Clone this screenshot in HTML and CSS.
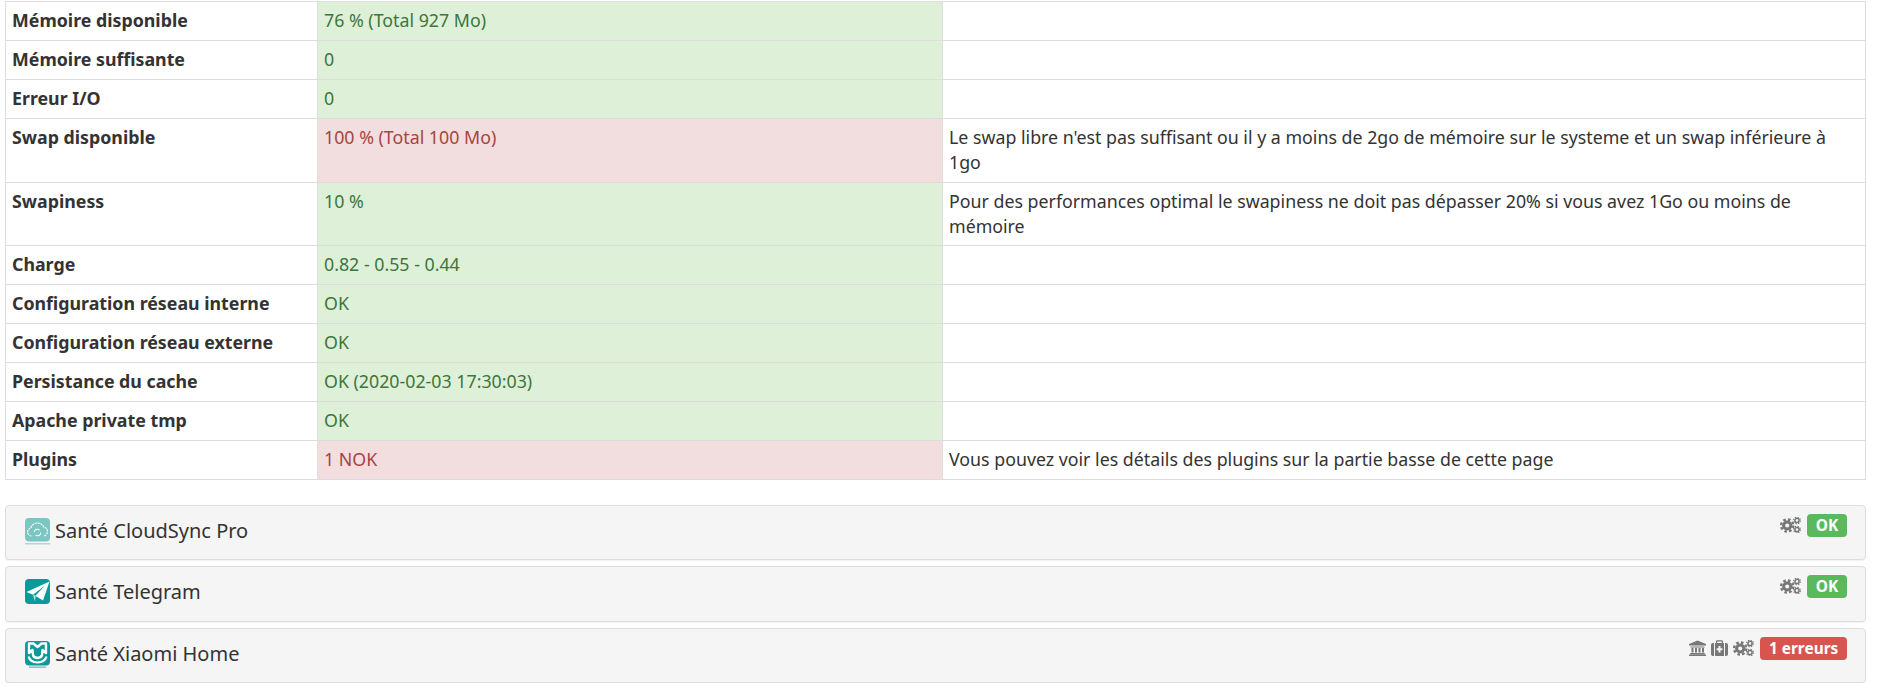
FILE: index.html
```html
<!DOCTYPE html>
<html lang="fr">
<head>
    <meta charset="UTF-8">
    <title>Santé</title>
    <link rel="stylesheet" href="styles.css">
</head>
<body>
    <svg class="defs" width="0" height="0">
        <symbol id="cogs" viewBox="0 0 21 16">
            <circle cx="7.2" cy="8.5" r="3.6" fill="none" stroke="currentColor" stroke-width="3"/>
            <circle cx="7.2" cy="8.5" r="6.1" fill="none" stroke="currentColor" stroke-width="2.400" stroke-dasharray="2.600 2.190"/>
            <circle cx="17" cy="3.4" r="2.100" fill="none" stroke="currentColor" stroke-width="1.500"/>
            <circle cx="17" cy="3.4" r="3.400" fill="none" stroke="currentColor" stroke-width="1.100" stroke-dasharray="1.400 1.270"/>
            <circle cx="17" cy="12.600" r="2.100" fill="none" stroke="currentColor" stroke-width="1.500"/>
            <circle cx="17" cy="12.600" r="3.400" fill="none" stroke="currentColor" stroke-width="1.100" stroke-dasharray="1.400 1.270"/>
        </symbol>
        <symbol id="bank" viewBox="0 0 17 16">
            <path d="M8.5 0.5 17 4v1.5H0V4z" fill="currentColor"/>
            <path d="M1.5 6.5h14v1h-14zM2.5 8h2v4.5h-2zM6 8h2v4.5H6zM9.5 8h2v4.5h-2zM13 8h2v4.500h-2zM1.200 13h14.600v1.200H1.200zM0 14.600h17V16H0z" fill="currentColor"/>
        </symbol>
        <symbol id="medkit" viewBox="0 0 17 16">
            <path fill-rule="evenodd" d="M5 3V1.500Q5 0.300 6.200 0.300h4.600Q12 0.300 12 1.500V3h1v13H4V3zM6.200 3h4.600V1.500H6.200zM7.500 6v2.200H5.600v2.100h1.900v2.200h2v-2.200h1.900V8.200h-1.900V6z" fill="currentColor"/>
            <path d="M0 5Q0 3 2 3h1v13H2Q0 16 0 14zM14 3h1q2 0 2 2v9q0 2-2 2h-1z" fill="currentColor"/>
        </symbol>
    </svg>

    <table class="health-table">
        <tr><th>Mémoire disponible</th><td class="ok">76 % (Total 927 Mo)</td><td></td></tr>
        <tr><th>Mémoire suffisante</th><td class="ok">0</td><td></td></tr>
        <tr><th>Erreur I/O</th><td class="ok">0</td><td></td></tr>
        <tr><th>Swap disponible</th><td class="nok">100 % (Total 100 Mo)</td><td>Le swap libre n'est pas suffisant ou il y a moins de 2go de mémoire sur le systeme et un swap inférieure à 1go</td></tr>
        <tr><th>Swapiness</th><td class="ok">10 %</td><td>Pour des performances optimal le swapiness ne doit pas dépasser 20% si vous avez 1Go ou moins de mémoire</td></tr>
        <tr><th>Charge</th><td class="ok">0.82 - 0.55 - 0.44</td><td></td></tr>
        <tr><th>Configuration réseau interne</th><td class="ok">OK</td><td></td></tr>
        <tr><th>Configuration réseau externe</th><td class="ok">OK</td><td></td></tr>
        <tr><th>Persistance du cache</th><td class="ok">OK (2020-02-03 17:30:03)</td><td></td></tr>
        <tr><th>Apache private tmp</th><td class="ok">OK</td><td></td></tr>
        <tr><th>Plugins</th><td class="nok">1 NOK</td><td>Vous pouvez voir les détails des plugins sur la partie basse de cette page</td></tr>
    </table>

    <div class="panels">
        <div class="panel">
            <h3 class="panel-title">
                <svg class="logo" viewBox="0 0 25 27">
                    <rect width="25" height="23.500" rx="4" fill="#7cc6c2"/>
                    <path d="M6.500 18a4 4 0 0 1-.8-7.900 7 7 0 0 1 13-1.200 4.700 4.700 0 0 1 .3 9.100" fill="none" stroke="#fff" stroke-width="1.100" stroke-dasharray="2.200 .7"/>
                    <circle cx="12.500" cy="14.500" r="3.200" fill="none" stroke="#fff" stroke-width="1.100" stroke-dasharray="7 3"/>
                    <rect x="0" y="25" width="25" height="1.500" fill="#7cc6c2" opacity=".6"/>
                </svg>
                Santé CloudSync Pro
            </h3>
            <div class="panel-status">
                <svg class="fa cogs"><use href="#cogs"/></svg>
                <span class="badge badge-ok">OK</span>
            </div>
        </div>
        <div class="panel">
            <h3 class="panel-title">
                <svg class="logo" viewBox="0 0 25 27">
                    <rect width="25" height="25" rx="4" fill="#0a9a9a"/>
                    <path d="M24.500 2.500 1.500 13l6.500 2.800L20 6.500l-9.500 10.200V17l7.500 4.500z" fill="#fff"/>
                    <path d="M8 15.800 10 22.500l.5-5.800z" fill="#cdeaea"/>
                </svg>
                Santé Telegram
            </h3>
            <div class="panel-status">
                <svg class="fa cogs"><use href="#cogs"/></svg>
                <span class="badge badge-ok">OK</span>
            </div>
        </div>
        <div class="panel">
            <h3 class="panel-title">
                <svg class="logo" viewBox="0 0 25 27">
                    <rect width="25" height="24.500" rx="4" fill="#0a9a9a"/>
                    <path d="M4 2.500h4.500l4 3.500 4-3.500H21v9.500l-3.500-3-.5 5q-.4 2.500-4.500 3-4.100-.5-4.500-3l-.5-5L4 12z" fill="none" stroke="#fff" stroke-width="2.400" stroke-linejoin="round"/>
                    <path d="M3.500 15.500q1.500 5.500 9 6 7.500-.5 9-6" fill="none" stroke="#fff" stroke-width="2.200"/>
                    <rect x="4" y="25.500" width="17" height="1.300" fill="#0a9a9a" opacity=".6"/>
                </svg>
                Santé Xiaomi Home
            </h3>
            <div class="panel-status">
                <svg class="fa bank"><use href="#bank"/></svg>
                <svg class="fa medkit"><use href="#medkit"/></svg>
                <svg class="fa cogs"><use href="#cogs"/></svg>
                <span class="badge badge-error">1 erreurs</span>
            </div>
        </div>
    </div>
</body>
</html>
```

FILE: styles.css
```css
* {
    box-sizing: border-box;
}

body {
    margin: 0;
    padding: 1px 11px 0 5px;
    font-family: 'Noto Sans', sans-serif;
    font-size: 17.8px;
    line-height: 25px;
    color: #333;
    background: #fff;
}

.defs {
    position: absolute;
}

.health-table {
    width: 100%;
    table-layout: fixed;
    border-collapse: collapse;
}

.health-table th,
.health-table td {
    padding: 6px 6px 6.9px;
    border: 1px solid #ddd;
    text-align: left;
    vertical-align: top;
}

.health-table th {
    width: 312px;
    font-weight: bold;
}

.health-table td:nth-child(2) {
    width: 625px;
}

.ok {
    background: #dff0d8;
    color: #3c763d;
}

.nok {
    background: #f2dede;
    color: #a94442;
}

.panels {
    margin-top: 25px;
    display: flex;
    flex-direction: column;
    gap: 6px;
}

.panel {
    height: 55.5px;
    display: flex;
    justify-content: space-between;
    padding: 8px 18px 0 19px;
    background: #f5f5f5;
    border: 1px solid #ddd;
    border-radius: 4px;
    box-shadow: 0 1px 1px rgba(0, 0, 0, 0.05);
}

.panel-title {
    margin: 4px 0 0;
    display: flex;
    align-items: flex-start;
    gap: 5px;
    font-size: 20px;
    font-weight: normal;
    line-height: 26px;
}

.logo {
    width: 25px;
    height: 27px;
    flex: none;
}

.panel-status {
    display: flex;
    align-items: flex-start;
    gap: 5px;
}

.fa {
    flex: none;
    color: #777;
    margin-top: 3px;
    height: 16px;
}

.cogs {
    width: 21px;
}

.bank,
.medkit {
    width: 17px;
}

.badge {
    margin-left: 1px;
    padding: 0 8.75px;
    height: 23px;
    border-radius: 4px;
    color: #fff;
    font-size: 15.4px;
    font-weight: bold;
    line-height: 23px;
}

.badge-ok {
    background: #5cb85c;
}

.badge-error {
    background: #d9534f;
}
```
